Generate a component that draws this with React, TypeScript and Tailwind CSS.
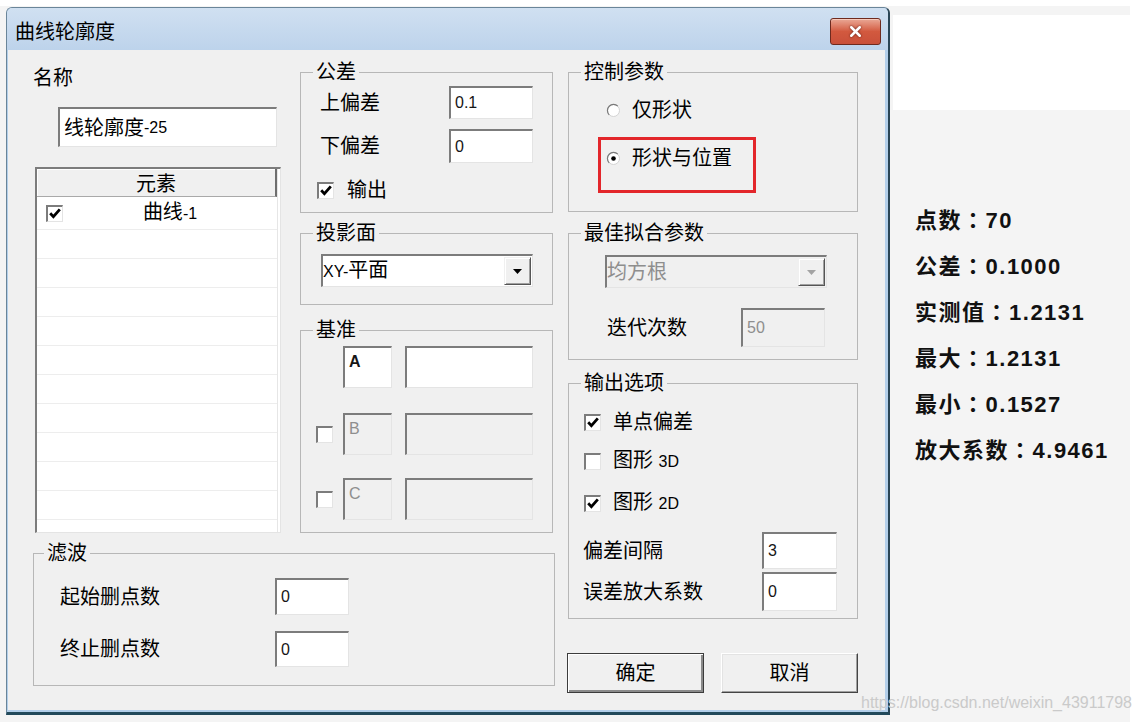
import { X } from "lucide-react";
import type { ReactNode } from "react";

const sunken =
  "border-t-2 border-l-2 border-t-[#7c7c7c] border-l-[#7c7c7c] border-r border-b border-r-[#e4e4e4] border-b-[#e4e4e4]";

function TextBox({
  value,
  className = "",
  disabled = false,
  top = false,
}: {
  value: ReactNode;
  className?: string;
  disabled?: boolean;
  top?: boolean;
}) {
  return (
    <div
      className={`${sunken} flex shrink-0 ${top ? "items-start pt-[5px]" : "items-center"} pl-[4px] text-[16px] leading-[18px] ${
        disabled ? "bg-[#f0f0f0] text-[#8e8e8e]" : "bg-white text-[#161616]"
      } ${className}`}
    >
      {value}
    </div>
  );
}

function Check({ checked = false }: { checked?: boolean }) {
  return (
    <span
      className={`${sunken} flex h-[17px] w-[17px] shrink-0 items-center justify-center bg-white`}
    >
      {checked && (
        <svg width="12" height="11" viewBox="0 0 12 11">
          <path d="M1.2 5.2 L4.4 8.6 L10.8 1.4" stroke="#000" strokeWidth="2.8" fill="none" />
        </svg>
      )}
    </span>
  );
}

function Radio({ checked = false }: { checked?: boolean }) {
  return (
    <svg width="15" height="15" viewBox="0 0 15 15" className="shrink-0">
      <circle cx="7.5" cy="7.5" r="6" fill="#fff" stroke="#d4d4d4" />
      <path d="M3.2 11.8 A6 6 0 0 1 11.8 3.2" stroke="#7a7a7a" strokeWidth="1.2" fill="none" />
      {checked && <circle cx="7.5" cy="7.5" r="2.3" fill="#000" />}
    </svg>
  );
}

function DropBtn({ disabled = false }: { disabled?: boolean }) {
  return (
    <div className="flex h-[28px] w-[27px] shrink-0 items-center justify-center border border-t-[#f0f0f0] border-l-[#f0f0f0] border-r-[#555] border-b-[#555] bg-[#f0f0f0] shadow-[inset_1px_1px_0_#ffffff,inset_-1px_-1px_0_#a0a0a0]">
      <svg width="9" height="5" viewBox="0 0 9 5">
        <path d="M0 0 H9 L4.5 5 Z" fill={disabled ? "#a3a3a3" : "#000"} />
      </svg>
    </div>
  );
}

function Group({
  title,
  className = "",
  legendClass = "ml-[12px]",
  children,
}: {
  title: string;
  className?: string;
  legendClass?: string;
  children: ReactNode;
}) {
  return (
    <fieldset className={`shrink-0 border border-[#b7b7b7] ${className}`}>
      <legend className={`${legendClass} px-[3px] text-[20px] leading-[20px]`}>{title}</legend>
      {children}
    </fieldset>
  );
}

function Btn({ label, primary = false }: { label: string; primary?: boolean }) {
  return (
    <button
      type="button"
      className={`flex h-[40px] w-[139px] items-center justify-center bg-[#f0f0f0] text-[20px] leading-[20px] ${
        primary
          ? "border border-[#3c3c3c] shadow-[inset_1px_1px_0_#ffffff,inset_-2px_-2px_0_#8a8a8a]"
          : "border border-t-[#ffffff] border-l-[#ffffff] border-r-[#444] border-b-[#444] shadow-[inset_-1px_-1px_0_#a0a0a0,inset_1px_1px_0_#e3e3e3]"
      }`}
    >
      {label}
    </button>
  );
}

function ElementList() {
  const empty = Array.from({ length: 11 }, (_, i) => i);
  return (
    <div className={`${sunken} ml-[2px] mt-[20px] flex h-[366px] w-[246px] overflow-hidden bg-white`}>
      <div className="flex w-[241px] flex-col border-r border-[#e6e6e6]">
        <div className="flex h-[28px] shrink-0 items-center justify-center border-r-2 border-b border-r-[#6e6e6e] border-b-[#a9a9a9] bg-[#f0f0f0] pt-[3px] shadow-[inset_1px_1px_0_#ffffff]">
          元素
        </div>
        <div className="flex h-[33px] shrink-0 items-center border-b border-[#ededed] pl-[9px]">
          <Check checked />
          <span className="flex-1 text-center">
            曲线<span className="text-[16px]">-1</span>
          </span>
        </div>
        {empty.map((i) => (
          <div key={i} className="h-[29px] shrink-0 border-b border-[#ededed]" />
        ))}
      </div>
    </div>
  );
}

function Dialog() {
  return (
    <div className="ml-[6px] mt-[1px] flex h-[708px] w-[884px] shrink-0 flex-col rounded-t-[6px] border border-[#6a8599] border-r-2 border-b-[3px] border-r-[#2a4555] border-b-[#234a5b] bg-[#b3cfea]">
      <div className="flex h-[42px] shrink-0 items-center justify-between rounded-t-[5px] bg-linear-to-b from-[#d0e0f1] to-[#bdd3eb] pl-[8px] pr-[7px]">
        <span className="mt-[6px] text-[20px] leading-[20px]">曲线轮廓度</span>
        <div className="mt-[5px] flex h-[27px] w-[51px] items-center justify-center rounded-[3px] border border-[#6e2a1e] bg-linear-to-b from-[#e9a896] via-[#d2593f] to-[#c9503a] shadow-[inset_0_1px_0_#f6c9bb]">
          <X size={17} strokeWidth={3.6} color="#ffffff" className="drop-shadow-[0_0_1px_#5a1a10]" />
        </div>
      </div>

      <div className="ml-[1px] mr-[3px] mb-[2px] flex flex-1 bg-[#f0f0f0] pl-[25px] pt-[12px] text-[20px] leading-[20px]">
        <div className="flex w-[522px] shrink-0 flex-col">
          <div className="flex">
            <div className="flex w-[248px] shrink-0 flex-col">
              <div className="mt-[6px]">名称</div>
              <TextBox
                className="ml-[25px] mt-[19px] h-[40px] w-[219px] !text-[20px] !leading-[20px] !text-black"
                value={
                  <>
                    线轮廓度<span className="text-[16px]">-25</span>
                  </>
                }
              />
              <ElementList />
            </div>

            <div className="ml-[19px] flex w-[253px] shrink-0 flex-col">
              <Group title="公差" className="h-[151px]">
                <div className="mt-[4px] flex items-center pl-[19px]">
                  <span className="w-[129px]">上偏差</span>
                  <TextBox value="0.1" className="h-[33px] w-[84px]" />
                </div>
                <div className="mt-[10px] flex items-center pl-[19px]">
                  <span className="w-[129px]">下偏差</span>
                  <TextBox value="0" className="h-[34px] w-[84px]" />
                </div>
                <div className="mt-[17px] flex items-center gap-[13px] pl-[16px]">
                  <Check checked />
                  <span>输出</span>
                </div>
              </Group>

              <Group title="投影面" className="mt-[10px] h-[82px]">
                <div className={`${sunken} ml-[20px] mt-[11px] flex h-[33px] w-[212px] items-center bg-white pr-[1px]`}>
                  <span className="flex-1">
                    <span className="text-[16px]">XY-</span>平面
                  </span>
                  <DropBtn />
                </div>
              </Group>

              <Group title="基准" className="mt-[15px] h-[213px]">
                <div className="mt-[6px] flex items-center pl-[15px]">
                  <span className="mr-[10px] w-[17px]" />
                  <TextBox top value={<span className="font-bold">A</span>} className="h-[42px] w-[49px]" />
                  <TextBox top value="" className="ml-[13px] h-[42px] w-[128px]" />
                </div>
                <div className="mt-[25px] flex items-center pl-[15px]">
                  <span className="mr-[10px]">
                    <Check />
                  </span>
                  <TextBox top disabled value="B" className="h-[42px] w-[49px]" />
                  <TextBox top disabled value="" className="ml-[13px] h-[42px] w-[128px]" />
                </div>
                <div className="mt-[23px] flex items-center pl-[15px]">
                  <span className="mr-[10px]">
                    <Check />
                  </span>
                  <TextBox top disabled value="C" className="h-[42px] w-[49px]" />
                  <TextBox top disabled value="" className="ml-[13px] h-[42px] w-[128px]" />
                </div>
              </Group>
            </div>
          </div>

          <Group title="滤波" className="mt-[10px] h-[143px]" legendClass="ml-[10px]">
            <div className="mt-[15px] flex items-center pl-[26px]">
              <span className="w-[215px]">起始删点数</span>
              <TextBox value="0" className="h-[37px] w-[74px]" />
            </div>
            <div className="mt-[16px] flex items-center pl-[26px]">
              <span className="w-[215px]">终止删点数</span>
              <TextBox value="0" className="h-[36px] w-[74px]" />
            </div>
          </Group>
        </div>

        <div className="ml-[13px] flex w-[290px] shrink-0 flex-col">
          <Group title="控制参数" className="h-[150px]">
            <div className="mt-[18px] flex items-center gap-[11px] pl-[37px]">
              <Radio />
              <span>仅形状</span>
            </div>
            <div className="ml-[29px] mt-[17px] h-[56px] w-[158px] border-[3px] border-[#e3262b] pl-[5px] pt-[8px]">
              <div className="flex items-center gap-[11px]">
                <Radio checked />
                <span>形状与位置</span>
              </div>
            </div>
          </Group>

          <Group title="最佳拟合参数" className="mt-[11px] h-[137px]">
            <div className={`${sunken} ml-[36px] mt-[12px] flex h-[33px] w-[222px] items-center bg-[#f0f0f0] pr-[1px] text-[#8e8e8e]`}>
              <span className="flex-1">均方根</span>
              <DropBtn disabled />
            </div>
            <div className="mt-[20px] flex items-center pl-[38px]">
              <span className="w-[134px]">迭代次数</span>
              <TextBox disabled value="50" className="h-[39px] w-[84px]" />
            </div>
          </Group>

          <Group title="输出选项" className="mt-[13px] h-[246px]">
            <div className="mt-[19px] flex items-center gap-[12px] pl-[15px]">
              <Check checked />
              <span>单点偏差</span>
            </div>
            <div className="mt-[18px] flex items-center gap-[12px] pl-[15px]">
              <Check />
              <span>
                图形 <span className="text-[16px]">3D</span>
              </span>
            </div>
            <div className="mt-[20px] flex items-center gap-[12px] pl-[15px]">
              <Check checked />
              <span>
                图形 <span className="text-[16px]">2D</span>
              </span>
            </div>
            <div className="mt-[18px] flex items-center pl-[14px]">
              <span className="w-[179px]">偏差间隔</span>
              <TextBox value="3" className="h-[37px] w-[75px]" />
            </div>
            <div className="mt-[3px] flex items-center pl-[14px]">
              <span className="w-[179px]">误差放大系数</span>
              <TextBox value="0" className="h-[39px] w-[75px]" />
            </div>
          </Group>

          <div className="-ml-px mt-[34px] flex gap-[17px]">
            <Btn label="确定" primary />
            <Btn label="取消" />
          </div>
        </div>
      </div>
    </div>
  );
}

const stats = [
  ["点数", "70"],
  ["公差", "0.1000"],
  ["实测值", "1.2131"],
  ["最大", "1.2131"],
  ["最小", "0.1527"],
  ["放大系数", "4.9461"],
];

function InfoPanel() {
  return (
    <div className="flex w-[240px] flex-col">
      <div className="ml-[3px] mt-[9px] h-[95px] w-[237px] bg-white" />
      <div className="ml-[25px] mt-[88px] flex flex-col text-[22px] font-bold tracking-[1.5px] text-[#111]">
        {stats.map(([k, v]) => (
          <div key={k} className="h-[46px] overflow-hidden whitespace-pre leading-[46px]">
            {k}
            <span className="font-['Noto_Sans_CJK_JP',sans-serif] leading-[0px]">：</span>
            {v}
          </div>
        ))}
      </div>
    </div>
  );
}

export default function App() {
  return (
    <div className="relative flex h-[722px] w-[1138px] flex-col overflow-hidden bg-white font-['Liberation_Sans','Noto_Sans_CJK_SC',sans-serif] text-black">
      <div className="h-[6px] shrink-0" />
      <div className="flex h-[716px] w-[1130px] shrink-0 bg-[#f4f4f4]">
        <Dialog />
        <InfoPanel />
      </div>
      <div className="absolute left-[861px] top-[693px] text-[16px] leading-[20px] text-[#cacaca]">
        https://blog.csdn.net/weixin_43911798
      </div>
    </div>
  );
}
